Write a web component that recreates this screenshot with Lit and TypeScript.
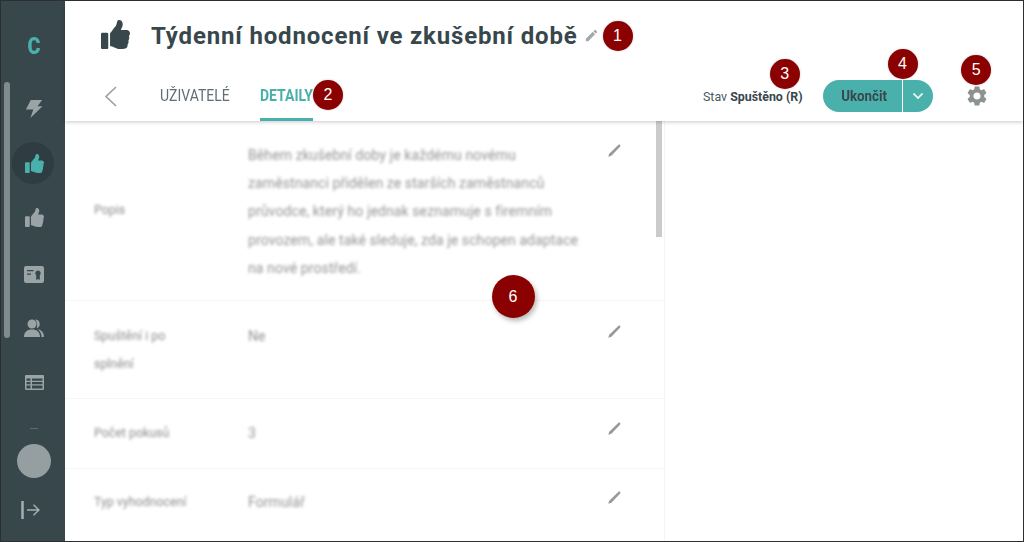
import { LitElement, html, css, svg } from "lit";
import { customElement } from "lit/decorators.js";

const thumb = svg`<path d="M104 224H24c-13.255 0-24 10.745-24 24v240c0 13.255 10.745 24 24 24h80c13.255 0 24-10.745 24-24V248c0-13.255-10.745-24-24-24zM384 81.452c0 42.416-25.97 66.208-33.277 94.548h101.723c33.397 0 59.397 27.746 59.553 58.098.084 17.938-7.546 37.249-19.439 49.197l-.11.11c9.836 23.337 8.237 56.037-9.308 79.469 8.681 25.895-.069 57.704-16.382 74.757 4.298 17.598 2.244 32.575-6.148 44.632C440.202 511.587 389.616 512 346.839 512l-2.845-.001c-48.287-.017-87.806-17.598-119.56-31.725-15.957-7.099-36.821-15.887-52.651-16.178-6.54-.12-11.783-5.457-11.783-11.998v-213.77c0-3.2 1.282-6.271 3.558-8.521 39.614-39.144 56.648-80.587 89.117-113.111 14.804-14.832 20.188-37.236 25.393-58.902C282.515 39.293 291.817 0 312 0c24 0 72 8 72 81.452z"/>`;
const pencilPath = svg`<path d="M3 17.25V21h3.75L17.81 9.94l-3.75-3.75L3 17.25zM20.71 7.04c.39-.39.39-1.02 0-1.41l-2.34-2.34c-.39-.39-1.02-.39-1.41 0l-1.83 1.83 3.75 3.75 1.83-1.83z"/>`;
const slimPencil = svg`<path d="M2 22l1.500-5L18 3.200c1-.9 2.300-.9 3 0s.7 2-.2 2.900L7 20.500z"/>`;

const rows = [
  { cls: "r1", label: ["Popis"], value: ["Během zkušební doby je každému novému", "zaměstnanci přidělen ze starších zaměstnanců", "průvodce, který ho jednak seznamuje s firemním", "provozem, ale také sleduje, zda je schopen adaptace", "na nové prostředí."] },
  { cls: "r2", label: ["Spuštění i po", "splnění"], value: ["Ne"] },
  { cls: "r3", label: ["Počet pokusů"], value: ["3"] },
  { cls: "r4", label: ["Typ vyhodnocení"], value: ["Formulář"] },
];

@customElement("app-root")
export class AppRoot extends LitElement {
  static styles = css`
    :host {
      display: flex;
      box-sizing: border-box;
      width: 1024px;
      height: 542px;
      border: 1px solid #2b2f31;
      position: relative;
      overflow: hidden;
      background: #fff;
      font-family: Roboto, "Liberation Sans", sans-serif;
      color: #37474c;
    }
    .side {
      width: 64px;
      flex: none;
      box-sizing: border-box;
      padding-left: 2px;
      background: #37474c;
      display: flex;
      flex-direction: column;
      align-items: center;
      position: relative;
    }
    .sb {
      position: absolute;
      left: 3px;
      top: 81px;
      width: 6px;
      height: 256px;
      border-radius: 3px;
      background: #7f8b8e;
    }
    .logo {
      height: 90px;
      display: flex;
      align-items: center;
      justify-content: center;
      font-size: 24px;
      font-weight: 900;
      color: #4ab0ac;
      transform: scaleX(0.82);
    }
    .nav {
      display: flex;
      flex-direction: column;
      align-items: center;
    }
    .item {
      width: 42px;
      height: 42px;
      margin-bottom: 13px;
      border-radius: 50%;
      display: flex;
      align-items: center;
      justify-content: center;
      color: #9aa3a5;
      box-sizing: border-box;
    }
    .item svg { fill: currentColor; display: block; }
    .item.bolt { height: 36px; margin-bottom: 15px; }
    .item.active { background: #2f3c41; color: #4ab0ac; margin-left: -2px; padding-left: 2px; }
    .item.t3 { margin-top: -1px; margin-bottom: 15px; }
    .item.cert { margin-bottom: 12px; }
    .item.users { margin-bottom: 12px; }
    .item.table { margin-bottom: 25px; }
    .dash { width: 8px; height: 1px; background: #5d6b6f; }
    .avatar { width: 34px; height: 34px; border-radius: 50%; background: #959ea0; margin-top: 15px; }
    .logout { margin-top: 23px; margin-right: 7px; display: block; }

    .main { flex: 1; min-width: 0; display: flex; flex-direction: column; }
    .head {
      height: 120px;
      flex: none;
      box-sizing: border-box;
      padding-left: 35px;
      box-shadow: 0 1px 4px rgba(0,0,0,.22);
      position: relative;
      z-index: 1;
      background: #fff;
    }
    .titlerow { height: 70px; display: flex; align-items: center; }
    .titlerow .big { width: 29px; height: 29px; fill: #37474c; margin: -3px 21px 0 1px; display: block; }
    h1 {
      margin: 0;
      font-size: 24px;
      font-weight: 700;
      letter-spacing: 0.83px;
      color: #37474c;
      white-space: nowrap;
    }
    .titlerow .pen { width: 15px; height: 15px; fill: #a3a9aa; margin-left: 6px; margin-top: -2px; }
    .tabs { height: 50px; display: flex; align-items: stretch; }
    .back { width: 60px; display: flex; align-items: center; padding-left: 4px; box-sizing: border-box; }
    .tab {
      box-sizing: border-box;
      height: 50px;
      padding-bottom: 1px;
      margin-right: 30px;
      display: flex;
      align-items: center;
      font-size: 16px;
      color: #5f6e73;
      white-space: nowrap;
    }
    .tab span { display: inline-block; transform: scaleX(.875); transform-origin: left center; }
    .tab.t1 { width: 70px; }
    .tab.t2 { width: 53px; margin-right: 0; color: #4ab0ac; font-weight: 700; border-bottom: 3px solid #4ab0ac; padding-top: 2px; padding-bottom: 0; }
    .spacer { flex: 1; }
    .stav { display: flex; align-items: center; font-size: 12.4px; color: #4a5a5f; white-space: nowrap; width: 120px; padding-top: 1px; box-sizing: border-box; margin-bottom: 1px; }
    .stav b { font-weight: 700; color: #37474c; }
    .btn { width: 110px; height: 32px; margin-top: 9px; border-radius: 16px; background: #4ab0ac; display: flex; overflow: hidden; flex: none; }
    .btn .a { width: 80px; box-sizing: border-box; border-right: 1px solid #fff; display: flex; align-items: center; justify-content: center; font-size: 14px; font-weight: 700; color: #37474c; padding-left: 3px; }
    .btn .a span { display: inline-block; transform: scaleX(.95); }
    .btn .b { flex: 1; display: flex; align-items: center; justify-content: center; }
    .gear { width: 24px; height: 24px; fill: #8c9192; margin: 13px 34px 0 32px; flex: none; display: block; }

    .content { flex: 1; min-height: 0; display: flex; }
    .pane {
      width: 600px;
      flex: none;
      box-sizing: border-box;
      border-right: 1px solid #f4f4f4;
      position: relative;
      padding-top: 2px;
    }
    .pane .thumbbar {
      position: absolute; right: 2px; top: 0; width: 6px; height: 116px; background: #c9cbcc;
    }
    .row {
      display: flex;
      box-sizing: border-box;
      border-bottom: 1px solid #f6f6f6;
      padding-left: 29px;
      position: relative;
    }
    .r1 { height: 178px; padding-top: 18px; align-items: flex-start; }
    .r2 { height: 98px; padding-top: 21px; }
    .r3 { height: 70px; padding-top: 20px; }
    .r4 { height: 72px; padding-top: 19px; border-bottom: 0; }
    .lab { width: 154px; flex: none; font-size: 12.4px; line-height: 28px; color: #8d8d8d; filter: blur(1.4px); }
    .r1 .lab { margin-top: 42px; padding-top: 13px; }
    .val { flex: 1; font-size: 14px; letter-spacing: .1px; line-height: 28.2px; color: #949494; filter: blur(1.4px); white-space: nowrap; }
    .l { display: block; }
    .pn { width: 15px; height: 15px; fill: #999; filter: blur(.6px); margin-right: 42px; margin-top: 2px; flex: none; }
    .rest { flex: 1; }

    .badge {
      position: absolute;
      width: 30px;
      height: 30px;
      box-sizing: border-box;
      border-radius: 50%;
      background: #8b0000;
      color: #fff;
      display: flex;
      align-items: center;
      justify-content: center;
      font-family: "Liberation Sans", sans-serif;
      font-size: 16px;
      z-index: 5;
      box-shadow: 0 0 2px rgba(120,120,120,.5);
    }
    .badge.big {
      width: 43px; height: 43px;
      box-shadow: 2px 3px 5px rgba(0,0,0,.28);
    }
  `;

  render() {
    const th = (s: number) => html`<svg width=${s} height=${s} viewBox="0 0 512 512">${thumb}</svg>`;
    return html`
      <aside class="side">
        <div class="sb"></div>
        <div class="logo">C</div>
        <nav class="nav">
          <div class="item bolt">
            <svg width="18" height="20" viewBox="0 0 20 20"><path d="M6.500 0H19l-5 7h5.500L6 20l3.200-9.500H1z"/></svg>
          </div>
          <div class="item active">${th(19)}</div>
          <div class="item t3">${th(19)}</div>
          <div class="item cert">
            <svg width="20" height="17" viewBox="0 0 20 17"><path fill-rule="evenodd" d="M2 0h16a2 2 0 0 1 2 2v13a2 2 0 0 1-2 2H2a2 2 0 0 1-2-2V2a2 2 0 0 1 2-2zM3 4v1.300h6.500V4zM3 7.500v1.200h4V7.500zM14 4.500a2.700 2.700 0 0 0-1.800 4.700V14l1.800-1 1.800 1V9.200A2.700 2.700 0 0 0 14 4.500z"/></svg>
          </div>
          <div class="item users">
            <svg width="20" height="19" viewBox="0 0 20 19"><circle cx="8" cy="5" r="4.500"/><path d="M0 18c0-5 3-7.500 8-7.500s8 2.500 8 7.500zM11 .5a4.500 4.500 0 0 1 1.500 8.800A6 6 0 0 0 13 5c0-1.800-.8-3.300-2-4.500zM13.500 10.300c3.800.7 6.500 3 6.500 7.700h-2.500c0-3.300-1.500-5.800-4-7.700z"/></svg>
          </div>
          <div class="item table">
            <svg width="19" height="15" viewBox="0 0 19 15"><path fill-rule="evenodd" d="M1 0h17a1 1 0 0 1 1 1v13a1 1 0 0 1-1 1H1a1 1 0 0 1-1-1V1a1 1 0 0 1 1-1zM1.500 3.500v2.300h4V3.500zM7 3.500v2.300h10.500V3.500zM1.500 7v2.300h4V7zM7 7v2.300h10.500V7zM1.500 10.500v3h4v-3zM7 10.500v3h10.500v-3z"/></svg>
          </div>
        </nav>
        <div class="dash"></div>
        <div class="avatar"></div>
        <svg class="logout" width="19" height="18" viewBox="0 0 19 18" fill="none" stroke="#a7aeb0"><path d="M1.500 0v18" stroke-width="2.500"/><path d="M6 9h12M12.500 3.800L18 9l-5.500 5.200" stroke-width="1.500"/></svg>
      </aside>
      <div class="main">
        <header class="head">
          <div class="titlerow">
            <svg class="big" viewBox="0 0 512 512">${thumb}</svg>
            <h1>Týdenní hodnocení ve zkušební době</h1>
            <svg class="pen" viewBox="0 0 24 24">${pencilPath}</svg>
          </div>
          <div class="tabs">
            <div class="back">
              <svg width="13" height="21" viewBox="0 0 13 21" fill="none" stroke="#9a9fa0" stroke-width="1.600"><path d="M12 1L2 10.500 12 20"/></svg>
            </div>
            <div class="tab t1"><span>UŽIVATELÉ</span></div>
            <div class="tab t2"><span>DETAILY</span></div>
            <div class="spacer"></div>
            <div class="stav"><span>Stav <b>Spuštěno (R)</b></span></div>
            <div class="btn">
              <div class="a"><span>Ukončit</span></div>
              <div class="b"><svg width="12" height="8" viewBox="0 0 12 8" fill="none" stroke="#fff" stroke-width="1.700"><path d="M1.500 1.500L6 6l4.500-4.500"/></svg></div>
            </div>
            <svg class="gear" viewBox="0 0 24 24"><path d="M19.140 12.940c.04-.3.06-.61.06-.94 0-.32-.02-.64-.07-.94l2.030-1.580c.18-.14.23-.41.12-.61l-1.920-3.320c-.12-.22-.37-.29-.59-.22l-2.390.96c-.5-.38-1.030-.7-1.620-.94l-.36-2.540c-.04-.24-.24-.41-.48-.41h-3.840c-.24 0-.43.17-.47.41l-.36 2.540c-.59.24-1.130.57-1.620.94l-2.390-.96c-.22-.08-.47 0-.59.22L2.740 8.870c-.12.21-.08.47.12.61l2.030 1.580c-.05.3-.09.63-.09.94s.02.64.07.94l-2.030 1.580c-.18.14-.23.41-.12.61l1.920 3.320c.12.22.37.29.59.22l2.390-.96c.5.38 1.030.7 1.620.94l.36 2.540c.05.24.24.41.48.41h3.840c.24 0 .44-.17.47-.41l.36-2.540c.59-.24 1.130-.56 1.620-.94l2.390.96c.22.08.47 0 .59-.22l1.920-3.320c.12-.22.07-.47-.12-.61l-2.010-1.580zM12 15.600c-1.980 0-3.600-1.620-3.600-3.600s1.620-3.600 3.600-3.600 3.600 1.620 3.600 3.600-1.620 3.600-3.600 3.600z"/></svg>
          </div>
        </header>
        <section class="content">
          <div class="pane">
            <div class="thumbbar"></div>
            ${rows.map(r => html`
              <div class="row ${r.cls}">
                <div class="lab">${r.label.map(t => html`<span class="l">${t}</span>`)}</div>
                <div class="val">${r.value.map(t => html`<span class="l">${t}</span>`)}</div>
                <svg class="pn" viewBox="0 0 24 24">${slimPencil}</svg>
              </div>`)}
          </div>
          <div class="rest"></div>
        </section>
      </div>
      <div class="badge" style="left:601.5px;top:19.5px">1</div>
      <div class="badge" style="left:312px;top:79px">2</div>
      <div class="badge" style="left:768.7px;top:57.5px">3</div>
      <div class="badge" style="left:886.5px;top:48px">4</div>
      <div class="badge" style="left:960.3px;top:53.5px">5</div>
      <div class="badge big" style="left:490.5px;top:274px">6</div>
    `;
  }
}
